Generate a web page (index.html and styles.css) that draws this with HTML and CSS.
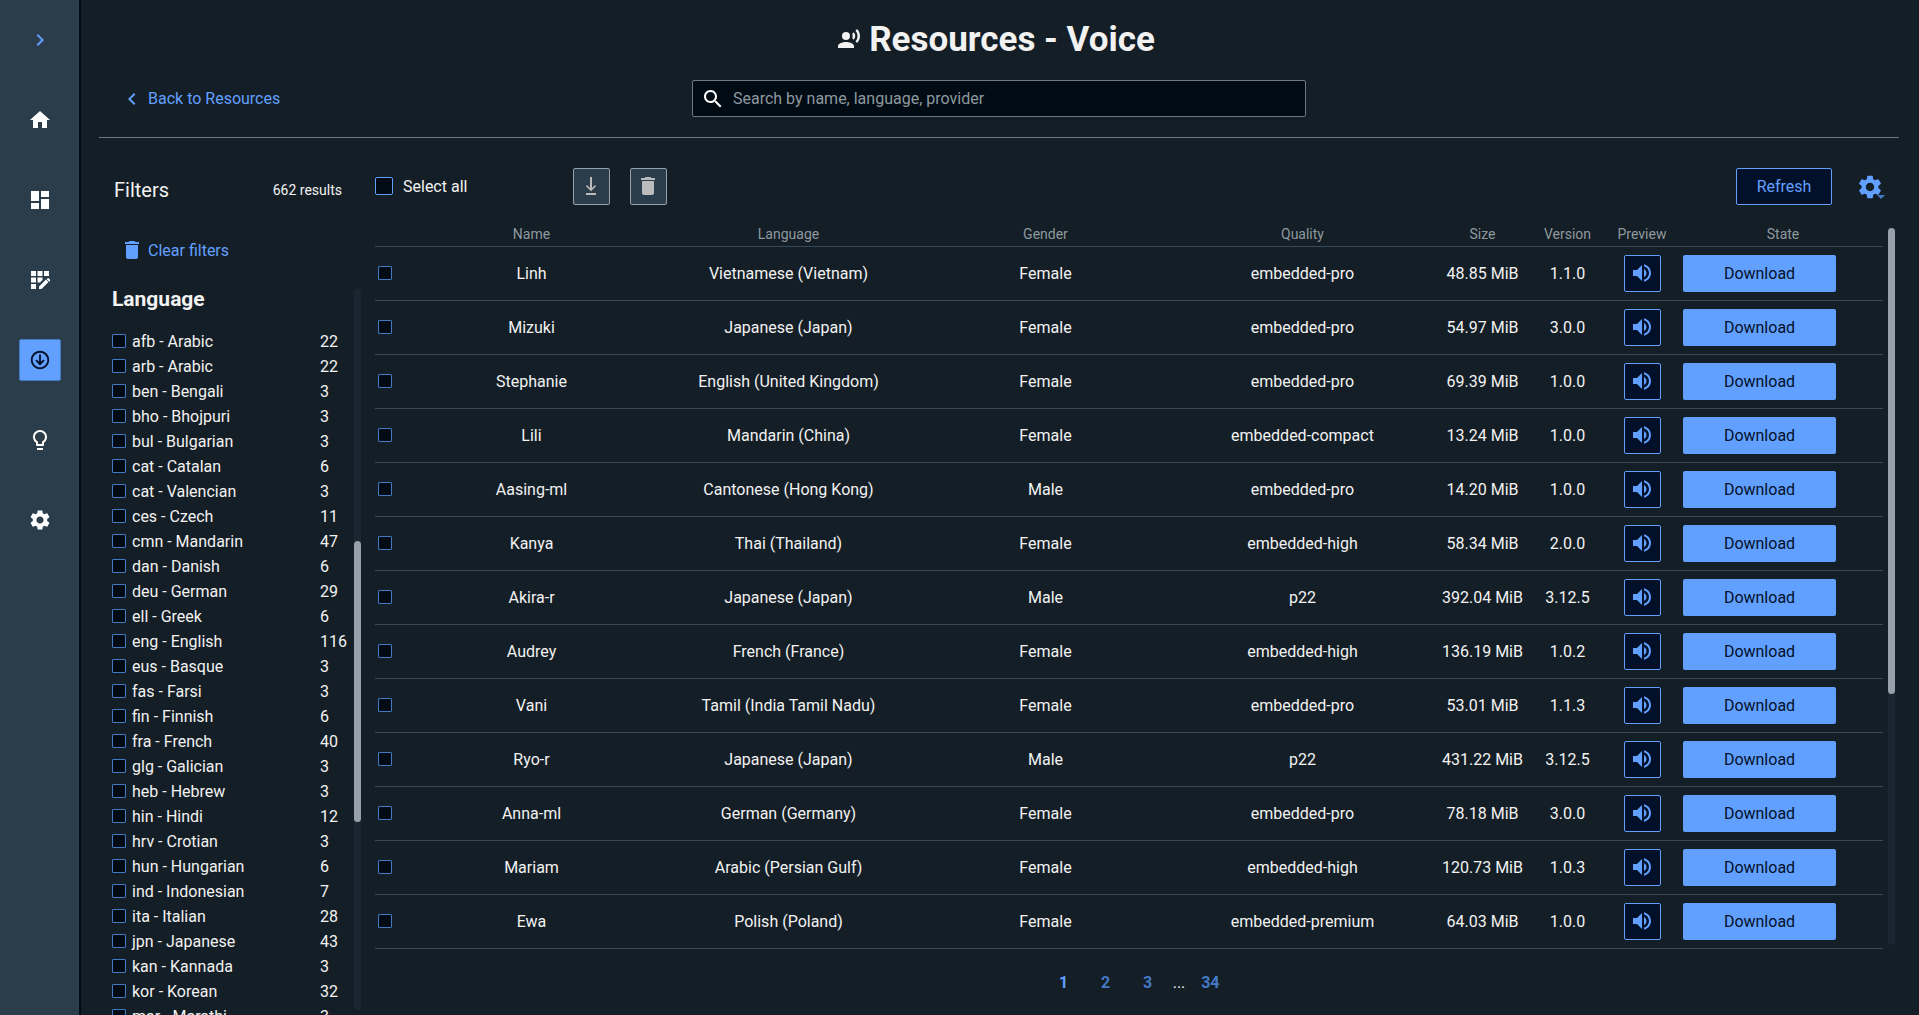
FILE: index.html
```html
<!DOCTYPE html>
<html lang="en">
<head>
    <meta charset="UTF-8">
    <meta name="viewport" content="width=device-width, initial-scale=1.0">
    <title>Resources - Voice</title>
    <link rel="stylesheet" href="styles.css">
</head>
<body>
    <!-- icon set -->
    <svg class="sprite" aria-hidden="true">
        <symbol id="i-right" viewBox="0 0 24 24"><path d="M10 6 8.600 7.400 13.200 12l-4.600 4.600L10 18l6-6z"/></symbol>
        <symbol id="i-left" viewBox="0 0 24 24"><path d="M15.410 7.410 14 6l-6 6 6 6 1.410-1.410L10.830 12z"/></symbol>
        <symbol id="i-home" viewBox="0 0 24 24"><path d="M10 20v-6h4v6h5v-8h3L12 3 2 12h3v8z"/></symbol>
        <symbol id="i-dash" viewBox="0 0 24 24"><path d="M3 13h8V3H3v10zm0 8h8v-6H3v6zm10 0h8V11h-8v10zm0-18v6h8V3h-8z"/></symbol>
        <symbol id="i-grid" viewBox="0 0 24 24"><path d="M3 3h5v5H3zM9.500 3h5v5h-5zM16 3h5v5h-5zM3 9.500h5v5H3zM3 16h5v5H3zM9.500 9.500h5v2.400l-2.600 2.600H9.500zM11 18.500V21h2.500l7-7-2.500-2.500zM21.700 11.300l-1-1c-.3-.3-.7-.3-1 0l-1 1 2.500 2.500 1-1c-.1-.1-.1-1.200-.5-1.500z"/></symbol>
        <symbol id="i-circle-down" viewBox="0 0 24 24"><path d="M12 4c4.410 0 8 3.590 8 8s-3.590 8-8 8-8-3.590-8-8 3.590-8 8-8m0-2C6.480 2 2 6.480 2 12s4.480 10 10 10 10-4.480 10-10S17.520 2 12 2zm-1 4v8L8.400 11.500 7 12.900l5 5 5-5-1.400-1.400L13 14V6z"/></symbol>
        <symbol id="i-bulb" viewBox="0 0 24 24"><path d="M9 21c0 .55.45 1 1 1h4c.55 0 1-.45 1-1v-1H9v1zm3-19C8.140 2 5 5.140 5 9c0 2.380 1.190 4.470 3 5.740V17c0 .55.45 1 1 1h6c.55 0 1-.45 1-1v-2.260c1.810-1.270 3-3.360 3-5.740 0-3.860-3.140-7-7-7zm2.850 11.100-.85.6V16h-4v-2.300l-.85-.6C7.800 12.160 7 10.630 7 9c0-2.760 2.240-5 5-5s5 2.240 5 5c0 1.630-.8 3.160-2.150 4.100z"/></symbol>
        <symbol id="i-gear" viewBox="0 0 24 24"><path d="M19.140 12.940c.04-.3.06-.61.06-.94 0-.32-.02-.64-.07-.94l2.030-1.580c.18-.14.23-.41.12-.61l-1.920-3.320c-.12-.22-.37-.29-.59-.22l-2.390.96c-.5-.38-1.030-.7-1.620-.94l-.36-2.540c-.04-.24-.24-.41-.48-.41h-3.840c-.24 0-.43.17-.47.41l-.36 2.540c-.59.24-1.130.57-1.620.94l-2.390-.96c-.22-.08-.47 0-.59.22L2.740 8.870c-.12.21-.08.47.12.61l2.030 1.580c-.05.3-.09.63-.09.94s.02.64.07.94l-2.030 1.580c-.18.14-.23.41-.12.61l1.920 3.320c.12.22.37.29.59.22l2.390-.96c.5.38 1.030.7 1.620.94l.36 2.540c.05.24.24.41.48.41h3.840c.24 0 .44-.17.47-.41l.36-2.540c.59-.24 1.130-.56 1.620-.94l2.390.96c.22.08.47 0 .59-.22l1.920-3.320c.12-.22.07-.47-.12-.61l-2.010-1.580zM12 15.600c-1.980 0-3.600-1.620-3.600-3.600s1.620-3.600 3.600-3.600 3.600 1.620 3.600 3.600-1.620 3.600-3.600 3.600z"/></symbol>
        <symbol id="i-voice" viewBox="0 0 24 24"><circle cx="9" cy="9" r="4"/><path d="M9 15c-2.670 0-8 1.340-8 4v2h16v-2c0-2.660-5.330-4-8-4zM16.760 5.360l-1.680 1.690c.84 1.180.84 2.710 0 3.890l1.680 1.690c2.020-2.020 2.020-5.070 0-7.270zM20.070 2l-1.630 1.630c2.770 3.020 2.770 7.560 0 10.740L20.070 16c3.900-3.890 3.910-9.950 0-14z"/></symbol>
        <symbol id="i-search" viewBox="0 0 24 24"><path d="M15.500 14h-.79l-.28-.27C15.410 12.590 16 11.110 16 9.500 16 5.910 13.090 3 9.500 3S3 5.910 3 9.500 5.910 16 9.500 16c1.610 0 3.090-.59 4.230-1.570l.27.28v.79l5 4.990L20.490 19l-4.990-5zm-6 0C7.010 14 5 11.990 5 9.500S7.010 5 9.500 5 14 7.010 14 9.500 11.990 14 9.500 14z"/></symbol>
        <symbol id="i-trash" viewBox="0 0 24 24"><path d="M6 19c0 1.100.9 2 2 2h8c1.100 0 2-.9 2-2V7H6v12zM19 4h-3.500l-1-1h-5l-1 1H5v2h14V4z"/></symbol>
        <symbol id="i-download" viewBox="0 0 24 24"><path d="M11 3h2v11l3-3 1 1.200-5 5-5-5L8 11l3 3zM7 19h10v2H7z"/></symbol>
        <symbol id="i-sound" viewBox="0 0 24 24"><path d="M3 9v6h4l5 5V4L7 9H3zm13.500 3c0-1.770-1.020-3.290-2.500-4.030v8.050c1.480-.73 2.500-2.250 2.500-4.020zM14 3.230v2.060c2.890.86 5 3.540 5 6.710s-2.110 5.850-5 6.710v2.060c4.010-.91 7-4.490 7-8.770s-2.990-7.860-7-8.770z"/></symbol>
    </svg>

    <nav class="sidebar">
        <button class="nav-btn expand" aria-label="Expand"><svg><use href="#i-right"/></svg></button>
        <a class="nav-btn" href="#home" aria-label="Home"><svg><use href="#i-home"/></svg></a>
        <a class="nav-btn" href="#dashboard" aria-label="Dashboard"><svg><use href="#i-dash"/></svg></a>
        <a class="nav-btn" href="#apps" aria-label="Applications"><svg><use href="#i-grid"/></svg></a>
        <a class="nav-btn active" href="#resources" aria-label="Resources"><svg><use href="#i-circle-down"/></svg></a>
        <a class="nav-btn" href="#tips" aria-label="Tips"><svg><use href="#i-bulb"/></svg></a>
        <a class="nav-btn" href="#settings" aria-label="Settings"><svg><use href="#i-gear"/></svg></a>
    </nav>

    <div class="page">
        <header class="header">
            <h1><svg class="voice-icon"><use href="#i-voice"/></svg>Resources - Voice</h1>
            <div class="header-row">
                <a class="link" href="#resources"><svg><use href="#i-left"/></svg>Back to Resources</a>
                <label class="search">
                    <svg><use href="#i-search"/></svg>
                    <input type="text" placeholder="Search by name, language, provider" aria-label="Search">
                </label>
            </div>
        </header>

        <div class="content">
            <aside class="filters">
                <div class="filters-head">
                    <h2>Filters</h2>
                    <span class="results">662 results</span>
                </div>
                <button class="link clear"><svg><use href="#i-trash"/></svg>Clear filters</button>
                <div class="scroll-area">
                    <div class="filter-list">
                        <h3>Language</h3>
                        <ul>
                            <li><label><input type="checkbox">afb - Arabic</label><span>22</span></li>
                            <li><label><input type="checkbox">arb - Arabic</label><span>22</span></li>
                            <li><label><input type="checkbox">ben - Bengali</label><span>3</span></li>
                            <li><label><input type="checkbox">bho - Bhojpuri</label><span>3</span></li>
                            <li><label><input type="checkbox">bul - Bulgarian</label><span>3</span></li>
                            <li><label><input type="checkbox">cat - Catalan</label><span>6</span></li>
                            <li><label><input type="checkbox">cat - Valencian</label><span>3</span></li>
                            <li><label><input type="checkbox">ces - Czech</label><span>11</span></li>
                            <li><label><input type="checkbox">cmn - Mandarin</label><span>47</span></li>
                            <li><label><input type="checkbox">dan - Danish</label><span>6</span></li>
                            <li><label><input type="checkbox">deu - German</label><span>29</span></li>
                            <li><label><input type="checkbox">ell - Greek</label><span>6</span></li>
                            <li><label><input type="checkbox">eng - English</label><span>116</span></li>
                            <li><label><input type="checkbox">eus - Basque</label><span>3</span></li>
                            <li><label><input type="checkbox">fas - Farsi</label><span>3</span></li>
                            <li><label><input type="checkbox">fin - Finnish</label><span>6</span></li>
                            <li><label><input type="checkbox">fra - French</label><span>40</span></li>
                            <li><label><input type="checkbox">glg - Galician</label><span>3</span></li>
                            <li><label><input type="checkbox">heb - Hebrew</label><span>3</span></li>
                            <li><label><input type="checkbox">hin - Hindi</label><span>12</span></li>
                            <li><label><input type="checkbox">hrv - Crotian</label><span>3</span></li>
                            <li><label><input type="checkbox">hun - Hungarian</label><span>6</span></li>
                            <li><label><input type="checkbox">ind - Indonesian</label><span>7</span></li>
                            <li><label><input type="checkbox">ita - Italian</label><span>28</span></li>
                            <li><label><input type="checkbox">jpn - Japanese</label><span>43</span></li>
                            <li><label><input type="checkbox">kan - Kannada</label><span>3</span></li>
                            <li><label><input type="checkbox">kor - Korean</label><span>32</span></li>
                            <li><label><input type="checkbox">mar - Marathi</label><span>3</span></li>
                        </ul>
                    </div>
                    <div class="rail filter-rail"><div class="thumb"></div></div>
                </div>
            </aside>

            <main class="main">
                <div class="toolbar">
                    <label class="select-all"><input type="checkbox">Select all</label>
                    <button class="tool-btn" aria-label="Download selected" disabled><svg><use href="#i-download"/></svg></button>
                    <button class="tool-btn" aria-label="Delete selected" disabled><svg><use href="#i-trash"/></svg></button>
                    <button class="refresh">Refresh</button>
                    <button class="options" aria-label="Table options"><svg><use href="#i-gear"/></svg></button>
                </div>
                <div class="table-area">
                    <table>
                        <colgroup>
                            <col class="c-check"><col><col><col><col><col class="c-size"><col class="c-version"><col class="c-preview"><col class="c-state">
                        </colgroup>
                        <thead>
                            <tr><th></th><th>Name</th><th>Language</th><th>Gender</th><th>Quality</th><th>Size</th><th>Version</th><th>Preview</th><th>State</th></tr>
                        </thead>
                        <tbody>
                            <tr>
                                <td><input type="checkbox" aria-label="Select Linh"></td><td>Linh</td><td>Vietnamese (Vietnam)</td><td>Female</td><td>embedded-pro</td><td>48.85 MiB</td><td>1.1.0</td>
                                <td><button class="play" aria-label="Play"><svg><use href="#i-sound"/></svg></button></td><td><button class="download">Download</button></td>
                            </tr>
                            <tr>
                                <td><input type="checkbox" aria-label="Select Mizuki"></td><td>Mizuki</td><td>Japanese (Japan)</td><td>Female</td><td>embedded-pro</td><td>54.97 MiB</td><td>3.0.0</td>
                                <td><button class="play" aria-label="Play"><svg><use href="#i-sound"/></svg></button></td><td><button class="download">Download</button></td>
                            </tr>
                            <tr>
                                <td><input type="checkbox" aria-label="Select Stephanie"></td><td>Stephanie</td><td>English (United Kingdom)</td><td>Female</td><td>embedded-pro</td><td>69.39 MiB</td><td>1.0.0</td>
                                <td><button class="play" aria-label="Play"><svg><use href="#i-sound"/></svg></button></td><td><button class="download">Download</button></td>
                            </tr>
                            <tr>
                                <td><input type="checkbox" aria-label="Select Lili"></td><td>Lili</td><td>Mandarin (China)</td><td>Female</td><td>embedded-compact</td><td>13.24 MiB</td><td>1.0.0</td>
                                <td><button class="play" aria-label="Play"><svg><use href="#i-sound"/></svg></button></td><td><button class="download">Download</button></td>
                            </tr>
                            <tr>
                                <td><input type="checkbox" aria-label="Select Aasing-ml"></td><td>Aasing-ml</td><td>Cantonese (Hong Kong)</td><td>Male</td><td>embedded-pro</td><td>14.20 MiB</td><td>1.0.0</td>
                                <td><button class="play" aria-label="Play"><svg><use href="#i-sound"/></svg></button></td><td><button class="download">Download</button></td>
                            </tr>
                            <tr>
                                <td><input type="checkbox" aria-label="Select Kanya"></td><td>Kanya</td><td>Thai (Thailand)</td><td>Female</td><td>embedded-high</td><td>58.34 MiB</td><td>2.0.0</td>
                                <td><button class="play" aria-label="Play"><svg><use href="#i-sound"/></svg></button></td><td><button class="download">Download</button></td>
                            </tr>
                            <tr>
                                <td><input type="checkbox" aria-label="Select Akira-r"></td><td>Akira-r</td><td>Japanese (Japan)</td><td>Male</td><td>p22</td><td>392.04 MiB</td><td>3.12.5</td>
                                <td><button class="play" aria-label="Play"><svg><use href="#i-sound"/></svg></button></td><td><button class="download">Download</button></td>
                            </tr>
                            <tr>
                                <td><input type="checkbox" aria-label="Select Audrey"></td><td>Audrey</td><td>French (France)</td><td>Female</td><td>embedded-high</td><td>136.19 MiB</td><td>1.0.2</td>
                                <td><button class="play" aria-label="Play"><svg><use href="#i-sound"/></svg></button></td><td><button class="download">Download</button></td>
                            </tr>
                            <tr>
                                <td><input type="checkbox" aria-label="Select Vani"></td><td>Vani</td><td>Tamil (India Tamil Nadu)</td><td>Female</td><td>embedded-pro</td><td>53.01 MiB</td><td>1.1.3</td>
                                <td><button class="play" aria-label="Play"><svg><use href="#i-sound"/></svg></button></td><td><button class="download">Download</button></td>
                            </tr>
                            <tr>
                                <td><input type="checkbox" aria-label="Select Ryo-r"></td><td>Ryo-r</td><td>Japanese (Japan)</td><td>Male</td><td>p22</td><td>431.22 MiB</td><td>3.12.5</td>
                                <td><button class="play" aria-label="Play"><svg><use href="#i-sound"/></svg></button></td><td><button class="download">Download</button></td>
                            </tr>
                            <tr>
                                <td><input type="checkbox" aria-label="Select Anna-ml"></td><td>Anna-ml</td><td>German (Germany)</td><td>Female</td><td>embedded-pro</td><td>78.18 MiB</td><td>3.0.0</td>
                                <td><button class="play" aria-label="Play"><svg><use href="#i-sound"/></svg></button></td><td><button class="download">Download</button></td>
                            </tr>
                            <tr>
                                <td><input type="checkbox" aria-label="Select Mariam"></td><td>Mariam</td><td>Arabic (Persian Gulf)</td><td>Female</td><td>embedded-high</td><td>120.73 MiB</td><td>1.0.3</td>
                                <td><button class="play" aria-label="Play"><svg><use href="#i-sound"/></svg></button></td><td><button class="download">Download</button></td>
                            </tr>
                            <tr>
                                <td><input type="checkbox" aria-label="Select Ewa"></td><td>Ewa</td><td>Polish (Poland)</td><td>Female</td><td>embedded-premium</td><td>64.03 MiB</td><td>1.0.0</td>
                                <td><button class="play" aria-label="Play"><svg><use href="#i-sound"/></svg></button></td><td><button class="download">Download</button></td>
                            </tr>
                        </tbody>
                    </table>
                    <div class="rail table-rail"><div class="thumb"></div></div>
                </div>
                <nav class="pagination" aria-label="Pages">
                    <a class="current" href="#1">1</a>
                    <a href="#2">2</a>
                    <a href="#3">3</a>
                    <span>...</span>
                    <a href="#34">34</a>
                </nav>
            </main>
        </div>
    </div>
</body>
</html>
```

FILE: styles.css
```css
* {
    box-sizing: border-box;
}

body {
    margin: 0;
    height: 100vh;
    display: flex;
    overflow: hidden;
    background: #141e26;
    color: #f2f2f2;
    font-family: Roboto, Arial, sans-serif;
    font-size: 16px;
}

h1, h2, h3, ul {
    margin: 0;
    padding: 0;
}

button, input {
    font: inherit;
}

button {
    padding: 0;
    cursor: pointer;
}

a {
    text-decoration: none;
}

svg {
    width: 24px;
    height: 24px;
    fill: currentColor;
    flex-shrink: 0;
}

.sprite {
    display: none;
}

input[type="checkbox"] {
    appearance: none;
    width: 14px;
    height: 14px;
    margin: 0;
    flex-shrink: 0;
    background: #000b14;
    border: 1px solid #4479c4;
    border-radius: 1px;
}

/* sidebar */
.sidebar {
    width: 81px;
    flex-shrink: 0;
    display: flex;
    flex-direction: column;
    align-items: center;
    gap: 38px;
    padding-top: 19px;
    background: #2b3c4a;
    border-right: 2px solid #000b14;
}

.nav-btn {
    width: 42px;
    height: 42px;
    display: flex;
    align-items: center;
    justify-content: center;
    background: none;
    border: 1px solid transparent;
    border-radius: 2px;
    color: #fff;
}

.nav-btn.expand {
    color: #62a0ff;
}

.nav-btn.active {
    background: #62a0ff;
    border-color: #4479c4;
    color: #03102a;
}

.nav-btn.active svg {
    width: 22px;
    height: 22px;
}

.page {
    flex: 1;
    min-width: 0;
    display: flex;
    flex-direction: column;
    padding: 0 20px 0 18px;
}

/* header */
.header {
    height: 138px;
    flex-shrink: 0;
    border-bottom: 1px solid #6b7882;
}

h1 {
    display: flex;
    align-items: center;
    justify-content: center;
    gap: 8px;
    height: 78px;
    margin-bottom: 2px;
    padding-right: 6px;
    font-size: 35px;
    font-weight: 700;
}

.header-row {
    display: grid;
    grid-template-columns: 1fr 614px 1fr;
    align-items: center;
}

.link {
    display: flex;
    align-items: center;
    gap: 4px;
    padding: 0 0 0 21px;
    background: none;
    border: none;
    color: #62a0ff;
}

.search {
    display: flex;
    align-items: center;
    gap: 8px;
    height: 37px;
    padding: 0 8px;
    background: #000b14;
    border: 1px solid #6b7882;
    border-radius: 2px;
    color: #fff;
}

.search input {
    flex: 1;
    padding: 0;
    background: none;
    border: none;
    outline: none;
    color: #f2f2f2;
}

.search input::placeholder {
    color: #8e999f;
}

.content {
    flex: 1;
    min-height: 0;
    display: flex;
    gap: 14px;
}

/* filters */
.filters {
    width: 262px;
    flex-shrink: 0;
    display: flex;
    flex-direction: column;
    padding-top: 38px;
}

.filters-head {
    display: flex;
    align-items: center;
    justify-content: space-between;
    height: 28px;
    padding: 0 19px 0 15px;
}

h2 {
    font-size: 20px;
    font-weight: 400;
}

.results {
    font-size: 14px;
}

.clear {
    height: 24px;
    margin: 34px 0 22px;
}

.scroll-area {
    flex: 1;
    min-height: 0;
    display: flex;
}

.filter-list {
    flex: 1;
    overflow: hidden;
    padding: 1px 0 0 13px;
}

h3 {
    height: 44px;
    line-height: 28px;
    font-size: 21px;
    font-weight: 700;
}

.filter-list li {
    display: flex;
    align-items: center;
    height: 25px;
}

.filter-list label {
    width: 208px;
    display: flex;
    align-items: center;
    gap: 6px;
}

.filter-list input[type="checkbox"] {
    margin-bottom: 1px;
}

.rail {
    width: 7px;
    flex-shrink: 0;
    background: #1a2733;
    border-radius: 4px;
}

.thumb {
    background: #98a1a9;
    border-radius: 4px;
}

.filter-rail {
    margin: 5px 0;
    padding-top: 252px;
}

.filter-rail .thumb {
    height: 60%;
}

/* table */
.main {
    flex: 1;
    min-width: 0;
    padding-top: 30px;
}

.toolbar {
    display: flex;
    align-items: center;
    gap: 20px;
    height: 37px;
    padding-right: 11px;
}

.select-all {
    width: 178px;
    display: flex;
    align-items: center;
    gap: 10px;
}

.select-all input[type="checkbox"] {
    width: 18px;
    height: 18px;
    margin-bottom: 1px;
    border-color: #62a0ff;
    border-radius: 2px;
}

.tool-btn, .play {
    width: 37px;
    height: 37px;
    display: flex;
    align-items: center;
    justify-content: center;
    padding: 0 1px 1px 0;
    border-radius: 2px;
}

.tool-btn {
    background: #2b3c4a;
    border: 1px solid #98a1a9;
    color: #bbb;
}

.refresh {
    width: 96px;
    height: 37px;
    margin-left: auto;
    background: #03102a;
    border: 1px solid #62a0ff;
    border-radius: 2px;
    color: #62a0ff;
}

.options {
    position: relative;
    width: 36px;
    height: 37px;
    display: flex;
    align-items: center;
    justify-content: center;
    background: none;
    border: none;
    color: #62a0ff;
}

.options svg {
    width: 28px;
    height: 28px;
}

.options::after {
    content: "";
    position: absolute;
    right: 3px;
    bottom: 6px;
    border: 4px solid transparent;
    border-top-color: #4479c4;
    border-bottom: none;
}

.table-area {
    display: flex;
    gap: 5px;
    margin-top: 23px;
    padding-right: 4px;
}

table {
    flex: 1;
    table-layout: fixed;
    width: 100%;
    border-collapse: separate;
    border-spacing: 0;
    text-align: center;
}

th, td {
    padding: 0;
    border-bottom: 1px solid #394a57;
}

th {
    height: 19px;
    line-height: 12px;
    padding-bottom: 6px;
    color: #8e999f;
    font-size: 14px;
    font-weight: 400;
}

td {
    height: 54px;
}

td:first-child input {
    display: block;
    margin: 0 0 1px 3px;
}

.c-check { width: 28px; }
.c-size { width: 103px; }
.c-version { width: 67px; }
.c-preview { width: 82px; }
.c-state { width: 200px; }

.play {
    margin: 0 auto;
    background: #03102a;
    border: 1px solid #62a0ff;
    color: #62a0ff;
}

.download {
    display: block;
    width: 153px;
    height: 37px;
    background: #62a0ff;
    border: none;
    border-radius: 2px;
    color: #03102a;
}

.table-rail {
    margin-bottom: 4px;
}

.table-rail .thumb {
    height: 65%;
}

.pagination {
    display: flex;
    justify-content: center;
    gap: 8px;
    margin-top: 24px;
    line-height: 20px;
}

.pagination a {
    width: 34px;
    text-align: center;
    color: #4479c4;
    font-weight: 700;
}

.pagination a.current {
    color: #62a0ff;
}
```
